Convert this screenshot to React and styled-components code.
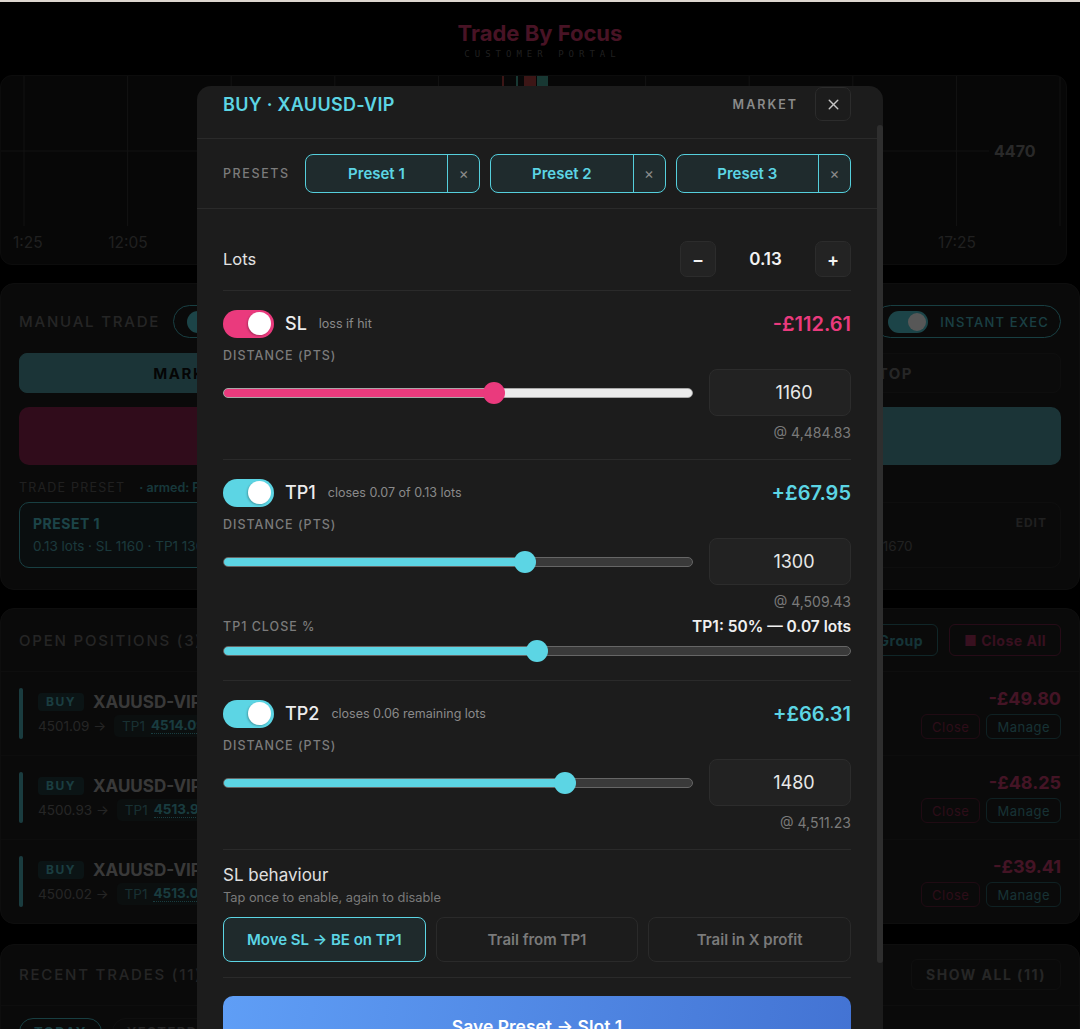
import React, { useState } from "react";
import styled, { createGlobalStyle } from "styled-components";
import { X } from "lucide-react";

const CYAN = "#5cd5e4";
const PINK = "#ea3a7d";

const GlobalStyle = createGlobalStyle`
  * { box-sizing: border-box; }
  html, body { margin: 0; padding: 0; background: #000; overflow: hidden; }
  body { font-family: Inter, "Noto Sans", Arial, sans-serif; -webkit-font-smoothing: antialiased; }
  button, input { font-family: inherit; }
`;

const Screen = styled.div`
  position: relative;
  height: 100vh;
  overflow: hidden;
  border-top: 2px solid #ddd6cf;
  background: #000;
`;

const Page = styled.div`
  display: flex;
  flex-direction: column;
`;

/* ---------- page behind the modal ---------- */

const Brand = styled.div`
  display: flex;
  flex-direction: column;
  align-items: center;
  padding: 18px 0 15px;
`;

const BrandName = styled.div`
  font-size: 22px;
  line-height: 26px;
  font-weight: 700;
  color: #d23a6c;
`;

const BrandSub = styled.div`
  margin-top: 2px;
  padding-left: 5px;
  font-family: "DejaVu Sans Mono", "Liberation Mono", monospace;
  font-size: 9px;
  line-height: 12px;
  letter-spacing: 5px;
  color: #5a5a5a;
`;

const ChartCard = styled.div`
  width: 1067px;
  height: 190px;
  background: #151515;
  border: 1px solid #242424;
  border-radius: 12px;
  overflow: hidden;
`;

const Card = styled.section`
  margin-top: ${(p) => p.$gap || 18}px;
  background: #1e1e1e;
  border: 1px solid #2a2a2a;
  border-radius: 14px;
`;

const ManualBody = styled.div`
  padding: 21px 18px;
  display: flex;
  flex-direction: column;
`;

const SpreadRow = styled.div`
  display: flex;
  align-items: center;
  justify-content: space-between;
`;

const Inline = styled.div`
  display: flex;
  align-items: center;
  gap: ${(p) => p.$gap || 13}px;
`;

const SectionLabel = styled.span`
  font-size: 15px;
  font-weight: 500;
  letter-spacing: 1.8px;
  color: #6e6e6e;
`;

const Pill = styled.div`
  height: 33px;
  display: flex;
  align-items: center;
  gap: 12px;
  padding: 0 11px 0 13px;
  border: 1.5px solid #48b8c2;
  border-radius: 17px;
`;

const MiniToggle = styled.span`
  width: 40px;
  height: 22px;
  border-radius: 11px;
  background: #52c8d3;
  display: flex;
  align-items: center;
  justify-content: flex-end;
  padding: 0 2px;
  &::after {
    content: "";
    width: 18px;
    height: 18px;
    border-radius: 50%;
    background: #fff;
  }
`;

const PillText = styled.span`
  font-size: 13px;
  font-weight: 500;
  letter-spacing: 1.2px;
  color: #4cbac5;
`;

const Tabs = styled.div`
  margin-top: 15px;
  display: grid;
  grid-template-columns: repeat(3, 1fr);
  gap: 7px;
`;

const Tab = styled.div`
  height: 40px;
  border-radius: 8px;
  display: flex;
  align-items: center;
  justify-content: center;
  font-size: 15px;
  font-weight: 700;
  letter-spacing: 1.5px;
  background: ${(p) => (p.$active ? "#4f9aa2" : "#202020")};
  border: 1px solid ${(p) => (p.$active ? "#4f9aa2" : "#2b2b2b")};
  color: ${(p) => (p.$active ? "#111" : "#707070")};
`;

const BigButtons = styled.div`
  margin-top: 14px;
  display: grid;
  grid-template-columns: 1fr 1fr;
  gap: 10px;
`;

const BigButton = styled.div`
  height: 58px;
  border-radius: 10px;
  background: ${(p) => p.$bg};
  display: flex;
  align-items: center;
  justify-content: center;
  font-size: 18px;
  font-weight: 700;
  letter-spacing: 1px;
  color: #111;
`;

const PresetLabelRow = styled.div`
  margin-top: 16px;
  display: flex;
  align-items: center;
  gap: 14px;
  line-height: 14px;
`;

const SmallLabel = styled.span`
  font-size: 12.5px;
  letter-spacing: 1.2px;
  color: #5e5e5e;
`;

const Armed = styled.span`
  font-size: 12.5px;
  font-weight: 600;
  color: #44a4ad;
`;

const PresetCards = styled.div`
  margin-top: 7px;
  display: grid;
  grid-template-columns: repeat(3, 1fr);
  gap: 7px;
`;

const PresetCard = styled.div`
  height: 66px;
  border-radius: 10px;
  padding: 12px 13px;
  border: 1.5px solid ${(p) => (p.$armed ? "#48b8c2" : "#2a2a2a")};
  background: ${(p) => (p.$armed ? "#1f2a2c" : "#1e1e1e")};
  display: flex;
  flex-direction: column;
  gap: 6px;
`;

const PresetTitle = styled.div`
  display: flex;
  justify-content: space-between;
  font-size: 14px;
  font-weight: 700;
  letter-spacing: 0.5px;
  color: ${(p) => (p.$armed ? "#52c8d3" : "#6e6e6e")};
`;

const EditLink = styled.span`
  font-size: 12px;
  letter-spacing: 1px;
  color: #5e5e5e;
`;

const PresetMeta = styled.div`
  font-size: 13.5px;
  color: ${(p) => (p.$armed ? "#4ea6b0" : "#626262")};
`;

const CardHeader = styled.div`
  display: flex;
  align-items: center;
  justify-content: space-between;
  padding: ${(p) => p.$pad || "15px 18px"};
  border-bottom: 1px solid #2a2a2a;
`;

const OutlineBtn = styled.div`
  height: ${(p) => p.$h || 32}px;
  padding: 0 ${(p) => p.$px || 14}px;
  border-radius: 6px;
  border: 1px solid ${(p) => p.$border};
  color: ${(p) => p.$color};
  display: flex;
  align-items: center;
  font-size: ${(p) => p.$size || 14}px;
  font-weight: ${(p) => p.$weight || 700};
  letter-spacing: ${(p) => p.$ls || 0.5}px;
`;

const PositionRow = styled.div`
  display: flex;
  align-items: center;
  justify-content: space-between;
  padding: 16px 18px;
  border-bottom: 1px solid #282828;
  &:last-child { border-bottom: none; }
`;

const SideBar = styled.span`
  width: 4px;
  height: 51px;
  border-radius: 2px;
  background: #4eb0ba;
`;

const PosInfo = styled.div`
  display: flex;
  flex-direction: column;
  gap: 2px;
`;

const PosLine = styled.div`
  height: 22px;
  display: flex;
  align-items: center;
  gap: ${(p) => p.$gap || 9}px;
`;

const SideBadge = styled.span`
  height: 18px;
  padding: 0 8px;
  border-radius: 4px;
  background: #213c3f;
  color: #4cb2bd;
  font-size: 12px;
  font-weight: 700;
  letter-spacing: 1.5px;
  display: flex;
  align-items: center;
`;

const Symbol = styled.span`
  font-size: 17px;
  font-weight: 700;
  color: #a8a8a8;
`;

const Entry = styled.span`
  font-size: 13.5px;
  color: #6e6e6e;
`;

const TargetTag = styled.span`
  height: 22px;
  padding: 0 8px;
  border-radius: 5px;
  background: #202c2d;
  display: flex;
  align-items: center;
  gap: 6px;
  font-size: 13.5px;
  color: #488c94;
  b {
    color: #4ab0ba;
    border-bottom: 1px dotted #4ab0ba;
  }
`;

const PosRight = styled.div`
  display: flex;
  flex-direction: column;
  align-items: flex-end;
  gap: 4px;
`;

const PosPnl = styled.span`
  font-size: 18px;
  line-height: 22px;
  font-weight: 700;
  color: #c83d6e;
`;

const FilterPills = styled.div`
  display: flex;
  gap: 10px;
  padding: 12px 18px 20px;
`;

const FilterPill = styled.span`
  height: 28px;
  padding: 0 14px;
  border-radius: 14px;
  border: 1.5px solid ${(p) => (p.$active ? "#48b8c2" : "#2e2e2e")};
  color: ${(p) => (p.$active ? "#4cbac5" : "#6a6a6a")};
  font-size: 13px;
  font-weight: 700;
  letter-spacing: 1.5px;
  display: flex;
  align-items: center;
`;

/* ---------- modal ---------- */

const Overlay = styled.div`
  position: absolute;
  inset: 0;
  background: rgba(0, 0, 0, 0.66);
  display: flex;
  justify-content: center;
  align-items: flex-start;
  padding-top: 84px;
`;

const Modal = styled.div`
  width: 686px;
  height: 958px;
  flex-shrink: 0;
  display: flex;
  background: #1c1c1c;
  border-radius: 14px;
  overflow: hidden;
  color: #e6e6e6;
`;

const ModalMain = styled.div`
  flex: 1;
  min-width: 0;
`;

const ScrollRail = styled.div`
  width: 6px;
  flex-shrink: 0;
  padding-top: 39px;
`;

const ScrollThumb = styled.div`
  height: 838px;
  border-radius: 3px;
  background: #2e2e2e;
`;

const ModalHeader = styled.header`
  display: flex;
  align-items: center;
  padding: 1px 26px 17px;
  border-bottom: 1px solid #2a2a2a;
`;

const ModalTitle = styled.h2`
  margin: 0;
  flex: 1;
  font-size: 18px;
  font-weight: 600;
  letter-spacing: 0.3px;
  color: ${CYAN};
`;

const OrderType = styled.span`
  font-size: 12.5px;
  font-weight: 600;
  letter-spacing: 2px;
  color: #8a8a8a;
  margin-right: 17px;
`;

const CloseBtn = styled.button`
  width: 36px;
  height: 34px;
  padding: 0;
  border: 1px solid #2c2c2c;
  border-radius: 7px;
  background: #1c1c1c;
  color: #c4c4c4;
  display: flex;
  align-items: center;
  justify-content: center;
`;

const PresetsBar = styled.div`
  display: flex;
  align-items: center;
  gap: 10px;
  padding: 15px 26px;
  border-bottom: 1px solid #2a2a2a;
`;

const Caps = styled.span`
  font-size: 12.5px;
  font-weight: 500;
  letter-spacing: ${(p) => p.$ls || 1}px;
  color: #7b7b7b;
  line-height: 14px;
`;

const PresetsLabel = styled(Caps)`
  margin-right: 5px;
`;

const Chip = styled.div`
  flex: 1;
  height: 39px;
  display: flex;
  border: 1.5px solid #55cfdc;
  border-radius: 8px;
  background: #1f2b2d;
  overflow: hidden;
`;

const ChipMain = styled.button`
  flex: 1;
  border: none;
  background: transparent;
  color: ${CYAN};
  font-size: 15px;
  font-weight: 600;
`;

const ChipRemove = styled.button`
  width: 32px;
  border: none;
  border-left: 1.5px solid #55cfdc;
  background: transparent;
  color: #8b8b8b;
  font-size: 15px;
  padding: 0;
`;

const Body = styled.div`
  padding: 0 26px 26px;
`;

const LotsRow = styled.div`
  display: flex;
  align-items: center;
  justify-content: space-between;
  padding: 32px 0 13px;
  border-bottom: 1px solid #2a2a2a;
`;

const LotsLabel = styled.span`
  font-size: 16.5px;
  color: #e2e2e2;
`;

const Stepper = styled.div`
  display: flex;
  align-items: center;
`;

const StepBtn = styled.button`
  width: 36px;
  height: 36px;
  padding: 0;
  border: 1px solid #2c2c2c;
  border-radius: 7px;
  background: #232323;
  color: #f2f2f2;
  font-size: 18px;
  font-weight: 600;
`;

const StepValue = styled.span`
  width: 99px;
  text-align: center;
  font-size: 17px;
  font-weight: 600;
  color: #f2f2f2;
`;

const Section = styled.div`
  padding: ${(p) => (p.$tight ? "15px 0" : "18px 0")};
  border-bottom: 1px solid #2a2a2a;
  display: flex;
  flex-direction: column;
`;

const LegHead = styled.div`
  height: 29px;
  display: flex;
  align-items: center;
`;

const Toggle = styled.span`
  width: 51px;
  height: 28px;
  border-radius: 14px;
  background: ${(p) => p.$color};
  display: flex;
  align-items: center;
  justify-content: flex-end;
  padding: 0 3px;
  margin-right: 11px;
  &::after {
    content: "";
    width: 23px;
    height: 23px;
    border-radius: 50%;
    background: #fff;
    box-shadow: -1px 1px 2px rgba(0, 0, 0, 0.25);
  }
`;

const LegName = styled.span`
  font-size: 18px;
  font-weight: 500;
  color: #ececec;
  margin-right: 12px;
`;

const LegHint = styled.span`
  font-size: 12.5px;
  color: #8a8a8a;
`;

const LegAmount = styled.span`
  margin-left: auto;
  font-size: 20px;
  font-weight: 600;
  color: ${(p) => p.$color};
`;

const FieldLabel = styled(Caps)`
  margin-top: 11px;
`;

const SliderRow = styled.div`
  margin-top: ${(p) => p.$mt || 6}px;
  min-height: 22px;
  display: flex;
  align-items: center;
  gap: 16px;
`;

const Range = styled.input.attrs({ type: "range" })`
  -webkit-appearance: none;
  appearance: none;
  flex: 1;
  min-width: 0;
  height: 10px;
  margin: 0;
  border-radius: 5px;
  border: 1px solid ${(p) => p.$edge};
  outline: none;
  &::-webkit-slider-thumb {
    -webkit-appearance: none;
    width: 22px;
    height: 22px;
    border-radius: 50%;
    border: none;
    background: ${(p) => p.$color};
  }
`;

const ValueInput = styled.input`
  width: 142px;
  height: 47px;
  flex-shrink: 0;
  border: 1px solid #2c2c2c;
  border-radius: 8px;
  background: #222;
  color: #e8e8e8;
  font-size: 18px;
  text-align: center;
  padding: 0 0 0 28px;
  outline: none;
`;

const AtPrice = styled.div`
  margin-top: 9px;
  text-align: right;
  font-size: 14px;
  line-height: 16px;
  color: #7a7a7a;
`;

const CloseRow = styled.div`
  margin-top: 9px;
  display: flex;
  justify-content: space-between;
  align-items: center;
  line-height: 16px;
`;

const CloseSummary = styled.span`
  font-size: 15.5px;
  font-weight: 600;
  color: #f0f0f0;
`;

const BehaviourTitle = styled.div`
  font-size: 17px;
  line-height: 20px;
  color: #e0e0e0;
`;

const BehaviourHint = styled.div`
  margin-top: 5px;
  font-size: 12.8px;
  line-height: 16px;
  color: #7a7a7a;
`;

const Choices = styled.div`
  margin-top: 11px;
  display: grid;
  grid-template-columns: repeat(3, 1fr);
  gap: 10px;
`;

const Choice = styled.button`
  height: 45px;
  border-radius: 8px;
  border: ${(p) => (p.$on ? `1.5px solid ${CYAN}` : "1px solid #2a2a2a")};
  background: ${(p) => (p.$on ? "#1f2a2c" : "#1c1c1c")};
  color: ${(p) => (p.$on ? CYAN : "#7a7a7a")};
  font-size: 15px;
  font-weight: 600;
`;

const SaveButton = styled.button`
  margin-top: 18px;
  width: 100%;
  height: 60px;
  border: none;
  border-radius: 10px;
  background: linear-gradient(100deg, #5f9ef6, #4373d3);
  color: #fff;
  font-size: 17.5px;
  font-weight: 600;
`;

const CancelButton = styled.button`
  margin-top: 10px;
  width: 100%;
  height: 48px;
  border: 1px solid #2c2c2c;
  border-radius: 10px;
  background: transparent;
  color: #9a9a9a;
  font-size: 15px;
  font-weight: 600;
`;

function Slider({ value, max, color, rest, edge }) {
  const [v, setV] = useState(value);
  const f = v / max;
  return (
    <Range
      min={0}
      max={max}
      value={v}
      onChange={(e) => setV(Number(e.target.value))}
      $color={color}
      $edge={edge}
      style={{
        background: `linear-gradient(to right, ${color} calc(11px + (100% - 22px) * ${f}), ${rest} 0)`,
      }}
    />
  );
}

function Leg({ name, hint, amount, color, value, at, rest, edge, children }) {
  return (
    <Section>
      <LegHead>
        <Toggle $color={color} />
        <LegName>{name}</LegName>
        <LegHint>{hint}</LegHint>
        <LegAmount $color={color}>{amount}</LegAmount>
      </LegHead>
      <FieldLabel>DISTANCE (PTS)</FieldLabel>
      <SliderRow>
        <Slider value={value} max={2000} color={color} rest={rest} edge={edge} />
        <ValueInput defaultValue={value} />
      </SliderRow>
      <AtPrice>@ {at}</AtPrice>
      {children}
    </Section>
  );
}

function Chart() {
  const xs = Array.from({ length: 11 }, (_, i) => 23 + i * 103.6);
  return (
    <svg width="1067" height="190" viewBox="0 0 1067 190">
      {xs.map((x) => (
        <line key={x} x1={x} y1="0" x2={x} y2="150" stroke="#363636" strokeWidth="1" />
      ))}
      <line x1="0" y1="75" x2="988" y2="75" stroke="#363636" strokeWidth="1" />
      <rect x="501" y="0" width="2" height="12" fill="#b04040" />
      <rect x="515" y="0" width="2" height="12" fill="#48a396" />
      <rect x="523" y="0" width="12" height="12" fill="#b04040" />
      <rect x="536" y="0" width="11" height="12" fill="#48a396" />
      <text x="993" y="81" fontFamily="Inter, sans-serif" fontSize="16" fontWeight="700" fill="#7a7a7a">
        4470
      </text>
      <g fontFamily="Inter, sans-serif" fontSize="15.5" fill="#5e5e5e">
        <text x="12" y="172">1:25</text>
        <text x="127" y="172" textAnchor="middle">12:05</text>
        <text x="956" y="172" textAnchor="middle">17:25</text>
      </g>
    </svg>
  );
}

const positions = [
  { entry: "4501.09", tp: "4514.09", pnl: "-£49.80" },
  { entry: "4500.93", tp: "4513.93", pnl: "-£48.25" },
  { entry: "4500.02", tp: "4513.02", pnl: "-£39.41" },
];

function Backdrop() {
  return (
    <Page>
      <Brand>
        <BrandName>Trade By Focus</BrandName>
        <BrandSub>CUSTOMER PORTAL</BrandSub>
      </Brand>
      <ChartCard>
        <Chart />
      </ChartCard>

      <Card>
        <ManualBody>
          <SpreadRow>
            <Inline>
              <SectionLabel>MANUAL TRADE</SectionLabel>
              <Pill>
                <MiniToggle />
                <PillText>ONE CLICK</PillText>
              </Pill>
            </Inline>
            <Pill>
              <MiniToggle />
              <PillText>INSTANT EXEC</PillText>
            </Pill>
          </SpreadRow>
          <Tabs>
            <Tab $active>MARKET</Tab>
            <Tab>LIMIT</Tab>
            <Tab>STOP</Tab>
          </Tabs>
          <BigButtons>
            <BigButton $bg="#8c2550">SELL</BigButton>
            <BigButton $bg="#4f9aa2">BUY</BigButton>
          </BigButtons>
          <PresetLabelRow>
            <SmallLabel>TRADE PRESET</SmallLabel>
            <Armed>· armed: Preset 1</Armed>
          </PresetLabelRow>
          <PresetCards>
            <PresetCard $armed>
              <PresetTitle $armed>
                PRESET 1<EditLink>EDIT</EditLink>
              </PresetTitle>
              <PresetMeta $armed>0.13 lots · SL 1160 · TP1 1300</PresetMeta>
            </PresetCard>
            <PresetCard>
              <PresetTitle>
                PRESET 2<EditLink>EDIT</EditLink>
              </PresetTitle>
              <PresetMeta>0.10 lots · SL 1000 · TP1 1500</PresetMeta>
            </PresetCard>
            <PresetCard>
              <PresetTitle>
                PRESET 3<EditLink>EDIT</EditLink>
              </PresetTitle>
              <PresetMeta>0.20 lots · SL 900 · TP1 1670</PresetMeta>
            </PresetCard>
          </PresetCards>
        </ManualBody>
      </Card>

      <Card>
        <CardHeader>
          <SectionLabel>OPEN POSITIONS (3)</SectionLabel>
          <Inline $gap={11}>
            <OutlineBtn $border="#2f7076" $color="#3f98a1">By Group</OutlineBtn>
            <OutlineBtn $border="#702244" $color="#a3305c">■ Close All</OutlineBtn>
          </Inline>
        </CardHeader>
        {positions.map((p) => (
          <PositionRow key={p.entry}>
            <Inline $gap={15}>
              <SideBar />
              <PosInfo>
                <PosLine>
                  <SideBadge>BUY</SideBadge>
                  <Symbol>XAUUSD-VIP</Symbol>
                </PosLine>
                <PosLine $gap={8}>
                  <Entry>{p.entry} →</Entry>
                  <TargetTag>
                    TP1 <b>{p.tp}</b>
                  </TargetTag>
                </PosLine>
              </PosInfo>
            </Inline>
            <PosRight>
              <PosPnl>{p.pnl}</PosPnl>
              <Inline $gap={6}>
                <OutlineBtn $h={25} $px={10} $size={13} $weight={400} $ls={0} $border="#5e2038" $color="#832747">
                  Close
                </OutlineBtn>
                <OutlineBtn $h={25} $px={10} $size={13} $weight={400} $ls={0} $border="#2d6166" $color="#43929a">
                  Manage
                </OutlineBtn>
              </Inline>
            </PosRight>
          </PositionRow>
        ))}
      </Card>

      <Card $gap={20}>
        <CardHeader $pad="14px 18px 15px">
          <SectionLabel>RECENT TRADES (11)</SectionLabel>
          <OutlineBtn $h={31} $border="#2c2c2c" $color="#707070" $ls={1.5}>
            SHOW ALL (11)
          </OutlineBtn>
        </CardHeader>
        <FilterPills>
          <FilterPill $active>TODAY</FilterPill>
          <FilterPill>YESTERDAY</FilterPill>
        </FilterPills>
      </Card>
    </Page>
  );
}

function PresetModal() {
  return (
    <Modal>
      <ModalMain>
        <ModalHeader>
          <ModalTitle>BUY · XAUUSD-VIP</ModalTitle>
          <OrderType>MARKET</OrderType>
          <CloseBtn aria-label="Close">
            <X size={17} strokeWidth={2} />
          </CloseBtn>
        </ModalHeader>

        <PresetsBar>
          <PresetsLabel $ls={1.6}>PRESETS</PresetsLabel>
          {["Preset 1", "Preset 2", "Preset 3"].map((name) => (
            <Chip key={name}>
              <ChipMain>{name}</ChipMain>
              <ChipRemove>×</ChipRemove>
            </Chip>
          ))}
        </PresetsBar>

        <Body>
          <LotsRow>
            <LotsLabel>Lots</LotsLabel>
            <Stepper>
              <StepBtn>−</StepBtn>
              <StepValue>0.13</StepValue>
              <StepBtn>+</StepBtn>
            </Stepper>
          </LotsRow>

          <Leg
            name="SL"
            hint="loss if hit"
            amount="-£112.61"
            color={PINK}
            value={1160}
            at="4,484.83"
            rest="#ebebeb"
            edge="#a8a8a8"
          />

          <Leg
            name="TP1"
            hint="closes 0.07 of 0.13 lots"
            amount="+£67.95"
            color={CYAN}
            value={1300}
            at="4,509.43"
            rest="#3a3a3a"
            edge="#666"
          >
            <CloseRow>
              <Caps>TP1 CLOSE %</Caps>
              <CloseSummary>TP1: 50% — 0.07 lots</CloseSummary>
            </CloseRow>
            <SliderRow $mt={5}>
              <Slider value={50} max={100} color={CYAN} rest="#3a3a3a" edge="#666" />
            </SliderRow>
          </Leg>

          <Leg
            name="TP2"
            hint="closes 0.06 remaining lots"
            amount="+£66.31"
            color={CYAN}
            value={1480}
            at="4,511.23"
            rest="#3a3a3a"
            edge="#666"
          />

          <Section $tight>
            <BehaviourTitle>SL behaviour</BehaviourTitle>
            <BehaviourHint>Tap once to enable, again to disable</BehaviourHint>
            <Choices>
              <Choice $on>Move SL → BE on TP1</Choice>
              <Choice>Trail from TP1</Choice>
              <Choice>Trail in X profit</Choice>
            </Choices>
          </Section>

          <SaveButton>Save Preset → Slot 1</SaveButton>
          <CancelButton>Cancel</CancelButton>
        </Body>
      </ModalMain>
      <ScrollRail>
        <ScrollThumb />
      </ScrollRail>
    </Modal>
  );
}

export default function App() {
  return (
    <>
      <GlobalStyle />
      <Screen>
        <Backdrop />
        <Overlay>
          <PresetModal />
        </Overlay>
      </Screen>
    </>
  );
}
